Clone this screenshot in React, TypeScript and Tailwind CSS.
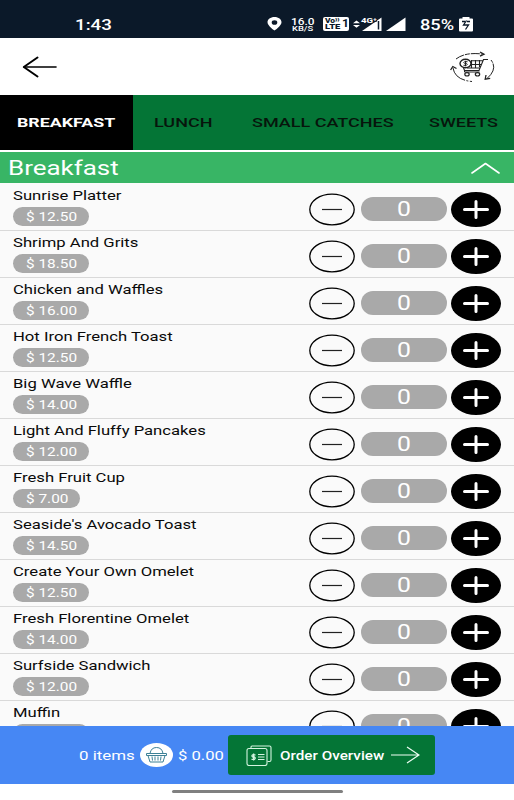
import { clsx } from 'clsx';

type MenuItem = {
    name: string;
    price: string;
};

const TABS = [
    { label: 'BREAKFAST', cell: 'w-[133px] pl-[17px]' },
    { label: 'LUNCH', cell: 'w-[98px] pl-[21px]' },
    { label: 'SMALL CATCHES', cell: 'w-[177px] pl-[21px]' },
    { label: 'SWEETS', cell: 'w-[106px] pl-[21px]' },
];

const ITEMS: MenuItem[] = [
    { name: 'Sunrise Platter', price: '12.50' },
    { name: 'Shrimp And Grits', price: '18.50' },
    { name: 'Chicken and Waffles', price: '16.00' },
    { name: 'Hot Iron French Toast', price: '12.50' },
    { name: 'Big Wave Waffle', price: '14.00' },
    { name: 'Light And Fluffy Pancakes', price: '12.00' },
    { name: 'Fresh Fruit Cup', price: '7.00' },
    { name: "Seaside's Avocado Toast", price: '14.50' },
    { name: 'Create Your Own Omelet', price: '12.50' },
    { name: 'Fresh Florentine Omelet', price: '14.00' },
    { name: 'Surfside Sandwich', price: '12.00' },
    { name: 'Muffin', price: '12.00' },
];

// Wide lettering, anchored at its left edge
const Wide = ({ children, className }: { children: React.ReactNode; className?: string }) => (
    <span className={clsx('block w-max origin-left whitespace-nowrap', className)}>{children}</span>
);

const StatusBar = () => (
    <div className="flex h-[38px] shrink-0 items-end bg-[#0b1929] pb-[4px] text-white">
        <div className="h-[18px] w-[267px] pl-[75px]">
            <Wide className="scale-x-[1.34] text-[14px] font-medium leading-[18px]">1:43</Wide>
        </div>
        <svg className="mb-[3px] h-[14px] w-[15px]" viewBox="0 0 15 14">
            <path fillRule="evenodd" fill="#fff" d="M7.500 0C3.400 0 .500 2.300.500 5.300.500 9 7.500 13.600 7.500 13.600S14.500 9 14.500 5.300C14.500 2.300 11.600 0 7.500 0zM7.500 3.200a2.800 2.300 0 1 1 0 4.600 2.800 2.300 0 0 1 0-4.600z" />
        </svg>
        <div className="ml-[9px] mb-[1px] flex h-[16px] w-[32px] flex-col">
            <Wide className="scale-x-[1.25] text-[9.5px] font-medium leading-[9px]">16.0</Wide>
            <Wide className="ml-[1px] scale-x-[1.25] text-[7.5px] font-medium leading-[6px]">KB/S</Wide>
        </div>
        <div className="mb-[3px] flex h-[14px] w-[26px] rounded-[2px] bg-white pl-[2px] text-[#0b1929]">
            <div className="w-[17px] pt-[1px]">
                <Wide className="scale-x-[1.2] text-[7px] font-black leading-[6px]">Vo⁾⁾</Wide>
                <Wide className="scale-x-[1.25] text-[7.5px] font-black leading-[6px]">LTE</Wide>
            </div>
            <Wide className="scale-x-[1.1] text-[11px] font-bold leading-[14px]">1</Wide>
        </div>
        <svg className="mb-[2px] ml-[4px] h-[16px] w-[56px]" viewBox="0 0 56 16">
            <path d="M0 7.200 3.500 4.500 7 7.200zM0 9 3.500 11.700 7 9z" fill="#fff" />
            <path d="M9 15 28.500 1.500V15z" fill="#fff" />
            <path d="M25.500 5v8.500" stroke="#0b1929" strokeWidth="1.500" />
            <path d="M8 0h16v5.500l-7 2H8z" fill="#0b1929" />
            <text x="8" y="6.500" fill="#fff" fontSize="7.500" fontWeight="700" textLength="16" lengthAdjust="spacingAndGlyphs">4G⁺</text>
            <path d="M33 15 52.500 1.500V15z" fill="#fff" />
        </svg>
        <div className="ml-[11px] h-[18px] w-[39px]">
            <Wide className="scale-x-[1.3] text-[14px] font-medium leading-[18px]">85%</Wide>
        </div>
        <svg className="mb-[2px] h-[15px] w-[14px]" viewBox="0 0 14 15">
            <path d="M3.500 1.500V0h7v1.500H13q1 0 1 1V13.500q0 1-1 1H1q-1 0-1-1v-11q0-1 1-1z" fill="#fff" />
            <path d="M3 4.500h3M8 4.500h3M7.500 3.500 4.500 8h5L6.500 12.500" fill="none" stroke="#0b1929" strokeWidth="1.300" />
        </svg>
    </div>
);

const CartCycleIcon = () => (
    <svg className="h-[32px] w-[46px]" viewBox="0 0 46 32" fill="none" stroke="#222" strokeWidth="1">
        <path d="M6 8Q15 1 32 3" strokeDasharray="9 1 5 1" />
        <path d="m30 1 4 2.200-4 2" strokeWidth="1.300" />
        <path d="M41 9q7 9-4 18.500" strokeDasharray="3 1 20" />
        <path d="m36 24-.8 4.200 5-.9" strokeWidth="1.300" />
        <path d="M22 30.500Q5 29 3 17" strokeDasharray="2 1.500 2 1.500 20" />
        <path d="m.600 19 2.200-3.500 3.700 2" strokeWidth="1.300" />
        <ellipse cx="15.500" cy="12.500" rx="5.500" ry="4.300" strokeWidth="1.400" />
        <path d="M17.500 10.700h-3q-1.500 1 0 1.700h2q1.500 1 0 1.900h-3M15.500 9.800v5.500" />
        <path d="M38 8.500h-4.500L29 19.500H14.500l-1-2.700M21 9.700h12M21 13.500h10.500M17 17h13M21.500 9v8M25.500 9v8M29.500 9v7" strokeWidth="1.100" />
        <path d="M14.500 19.500v1.500h15" />
        <ellipse cx="17" cy="23.300" rx="2.200" ry="1.700" strokeWidth="1.200" />
        <ellipse cx="27.500" cy="23.300" rx="2.200" ry="1.700" strokeWidth="1.200" />
    </svg>
);

const Header = () => (
    <header className="flex h-[57px] shrink-0 items-center justify-between bg-white pl-[22px] pr-[18px]">
        <svg className="h-[22px] w-[36px]" viewBox="0 0 36 22" fill="none" stroke="#000" strokeLinecap="round" strokeLinejoin="round">
            <path d="M2 11h32" strokeWidth="1.600" />
            <path d="M15.500 1.500 1.800 11l13.700 9.500" strokeWidth="2" />
        </svg>
        <CartCycleIcon />
    </header>
);

const Tabs = () => (
    <nav className="flex h-[55px] shrink-0 bg-[#047536]">
        {TABS.map((tab, i) => (
            <div key={tab.label} className={clsx('flex shrink-0 items-center pt-px', tab.cell, i === 0 ? 'bg-black text-white' : 'text-[#07150c]')}>
                <Wide className={clsx('text-[13px]', i === 0 ? 'scale-x-[1.37] font-bold' : 'scale-x-[1.385] font-medium')}>{tab.label}</Wide>
            </div>
        ))}
    </nav>
);

const Stepper = () => (
    <div className="flex h-full items-center pt-[4px]">
        <svg className="h-[33px] w-[46px]" viewBox="0 0 46 33" fill="none" stroke="#000">
            <ellipse cx="23" cy="16.500" rx="22.200" ry="15.400" strokeWidth="1.300" />
            <path d="M13 16.500h20" stroke="#222" strokeWidth="1.200" />
        </svg>
        <div className="ml-[6px] flex h-[24px] w-[86px] items-center rounded-full bg-[#a9a9a9] pl-[36px] pt-[2px] text-white">
            <Wide className="scale-x-[1.27] text-[19.5px] leading-[24px]">0</Wide>
        </div>
        <svg className="ml-[4px] h-[35px] w-[50px]" viewBox="0 0 50 35">
            <ellipse cx="25" cy="17.500" rx="25" ry="17.500" fill="#000" />
            <path d="M13.500 17.500h23M25 9.500v16" stroke="#fff" strokeWidth="3" strokeLinecap="round" />
        </svg>
    </div>
);

const ItemRow = ({ item }: { item: MenuItem }) => (
    <li className="flex h-[47px] shrink-0 justify-between border-b border-[#d9d9d9] pl-[13px] pr-[13px]">
        <div className="pt-[4px]">
            <Wide className="scale-x-[1.28] text-[13px] leading-[16px] text-[#0a0a0a]">{item.name}</Wide>
            <div className={clsx('mt-[3px] flex h-[19px] items-center rounded-full bg-[#a9a9a9] pl-[13px] pt-[2px] text-white', item.price.length > 4 ? 'w-[76px]' : 'w-[67px]')}>
                <Wide className="scale-x-[1.28] text-[12px] leading-[19px]">$ {item.price}</Wide>
            </div>
        </div>
        <Stepper />
    </li>
);

const OrderBar = () => (
    <footer className="flex h-[58px] shrink-0 items-center bg-[#4687f4] pl-[79px] text-white">
        <div className="w-[61px] pt-[2px]">
            <Wide className="scale-x-[1.3] text-[13px]">0 items</Wide>
        </div>
        <svg className="h-[24px] w-[33px]" viewBox="0 0 33 24" fill="none" stroke="#3d8196" strokeWidth="1">
            <ellipse cx="16.500" cy="12" rx="16.500" ry="12" fill="#fff" stroke="none" />
            <path d="M6.500 10.500h20v2h-20zM8 12.500 10 19h13l2-6.500M10 10.500q1-6 6.500-6t6.500 6M12 13.500l.5 4M15 13.500v4M18 13.500v4M21 13.500l-.5 4" />
        </svg>
        <div className="w-[55px] pl-[5px] pt-[2px]">
            <Wide className="scale-x-[1.28] text-[13px]">$ 0.00</Wide>
        </div>
        <button className="flex h-[40px] w-[207px] items-center rounded-[3px] bg-[#047536] pl-[18px]">
            <svg className="h-[21px] w-[26px]" viewBox="0 0 26 21" fill="none" stroke="#d5f5e0" strokeWidth="1.100">
                <rect x="1" y="3.500" width="20" height="17" rx="2" />
                <path d="M5 3V2q0-1 1-1h17.500q1.500 0 1.500 1.500V15q0 1.500-1.500 1.500H21.500" />
                <path d="M12 9.500h6.500M12 12h6.500M12 14.500h6.500" />
                <path d="M9.500 9.800H6.700q-1.500 1.200 0 2.200h1.800q1.500 1.200 0 2.300H5.500M7.600 8.500v7" strokeWidth="1.300" />
            </svg>
            <div className="ml-[8px] w-[111px] pt-px">
                <Wide className="scale-x-[1.27] text-[12px] font-medium">Order Overview</Wide>
            </div>
            <svg className="h-[18px] w-[29px]" viewBox="0 0 29 18" fill="none" stroke="#effff4" strokeWidth="1.200">
                <path d="M0 9h27.500M16 1l12 8-12 8" />
            </svg>
        </button>
    </footer>
);

export default function App() {
    return (
        <div className="flex h-[800px] w-[514px] flex-col overflow-hidden bg-white font-['Roboto',sans-serif]">
            <StatusBar />
            <Header />
            <Tabs />
            <div className="mt-[2px] flex h-[31px] shrink-0 items-center justify-between bg-[#38b565] pl-[8px] pr-[14px] text-white">
                <Wide className="scale-x-[1.33] pt-[2px] text-[19.5px] leading-[28px]">Breakfast</Wide>
                <svg className="h-[12px] w-[29px]" viewBox="0 0 29 12" fill="none" stroke="#fff" strokeWidth="1.600">
                    <path d="M1 11 14.500 1.500 28 11" strokeLinecap="round" strokeLinejoin="round" />
                </svg>
            </div>
            <ul className="flex h-[543px] shrink-0 flex-col overflow-hidden bg-[#fafafa] pt-px">
                {ITEMS.map((item) => (
                    <ItemRow key={item.name} item={item} />
                ))}
            </ul>
            <OrderBar />
            <div className="flex h-[16px] justify-center bg-white pt-[6px]">
                <div className="h-[3px] w-[171px] rounded-full bg-[#808080]" />
            </div>
        </div>
    );
}
